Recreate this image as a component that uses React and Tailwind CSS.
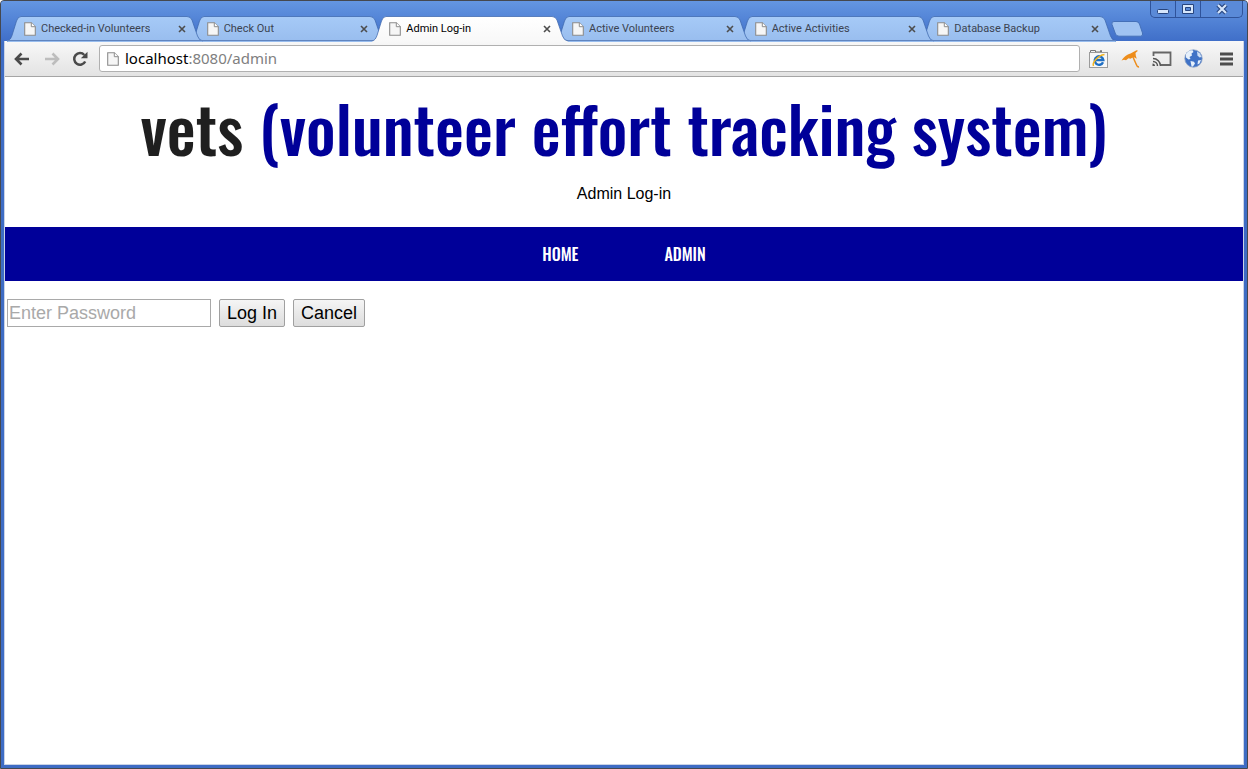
const tabs = [
  { title: 'Checked-in Volunteers', z: 'z-[6]' },
  { title: 'Check Out', z: 'z-[5]' },
  { title: 'Admin Log-in', z: 'z-[10]', active: true },
  { title: 'Active Volunteers', z: 'z-[4]' },
  { title: 'Active Activities', z: 'z-[3]' },
  { title: 'Database Backup', z: 'z-[2]' },
];

function PageIcon({ className = '' }) {
  return (
    <svg className={`shrink-0 ${className}`} width="12" height="14" viewBox="0 0 12 14" aria-hidden="true">
      <path d="M.7.7h6.6l4 4v8.6H.7z" fill="#f6f6f6" stroke="#8c8c8c" strokeWidth="1.1" />
      <path d="M7.3.7v4h4" fill="#fff" stroke="#8c8c8c" />
    </svg>
  );
}

function TabShape({ active }) {
  return (
    <svg className="absolute top-0 left-0 -z-10" width="196" height="26" viewBox="0 0 196 26" aria-hidden="true">
      <defs>
        <linearGradient id="tabIdle" x1="0" y1="0" x2="0" y2="1">
          <stop offset="0" stopColor="#a6caf7" />
          <stop offset="1" stopColor="#98bdee" />
        </linearGradient>
        <linearGradient id="tabActive" x1="0" y1="0" x2="0" y2="1">
          <stop offset="0" stopColor="#ffffff" />
          <stop offset="1" stopColor="#f8f8f8" />
        </linearGradient>
      </defs>
      <path
        d="M0 25C3 24.500 4 22 5 19.500L9.500 5Q11 .5 14 .5H180Q183.500.5 185 4L190.500 20Q192 24.500 196 25V26H0Z"
        fill={active ? 'url(#tabActive)' : 'url(#tabIdle)'}
      />
      <path
        d="M0 25C3 24.500 4 22 5 19.500L9.500 5Q11 .5 14 .5H180Q183.500.5 185 4L190.500 20Q192 24.500 196 25"
        fill="none"
        stroke="#3f68ad"
        strokeOpacity=".75"
      />
      {!active && <path d="M0 24.500H196" stroke="#5f84bf" />}
    </svg>
  );
}

function Tab({ title, z, active }) {
  return (
    <li className={`relative isolate flex h-[26px] items-center pl-[17px] ${z}`}>
      <TabShape active={active} />
      <a href="#tab" className="flex min-w-0 flex-1 items-center gap-[5px]">
        <PageIcon />
        <span className={`truncate text-[11px] leading-4 ${active ? 'text-black' : 'text-[#3b4351]'}`}>{title}</span>
      </a>
      <button type="button" aria-label={`Close ${title}`} className="flex h-4 w-4 items-center justify-center">
        <svg width="8" height="8" viewBox="0 0 8 8" aria-hidden="true">
          <path d="M1 1l6 6M7 1L1 7" stroke="#4d4d4d" strokeWidth="1.600" />
        </svg>
      </button>
    </li>
  );
}

function WindowControls() {
  const cell = 'flex h-full items-center justify-center';
  return (
    <div className="absolute top-0 right-1 flex h-[17px] rounded-b-[5px] border border-t-0 border-[#2f539a] bg-[#5a8ad8]">
      <button type="button" aria-label="Minimize" className={`${cell} w-[25px] border-r border-[#2f539a]`}>
        <svg width="14" height="14" viewBox="0 0 14 14" aria-hidden="true">
          <rect x="1.500" y="7.500" width="11" height="4" rx="1" fill="#d6e6fb" stroke="#27457f" />
        </svg>
      </button>
      <button type="button" aria-label="Maximize" className={`${cell} w-[25px] border-r border-[#2f539a]`}>
        <svg width="14" height="14" viewBox="0 0 14 14" aria-hidden="true">
          <path d="M1.500 2.500h11v9h-11z" fill="#d6e6fb" stroke="#27457f" />
          <path d="M4.500 5.500h5v3h-5z" fill="#5a8ad8" stroke="#27457f" />
        </svg>
      </button>
      <button type="button" aria-label="Close window" className={`${cell} w-[41px]`}>
        <svg width="14" height="14" viewBox="0 0 14 14" aria-hidden="true">
          <path d="M3 3l8 8M11 3l-8 8" stroke="#27457f" strokeWidth="4.500" />
          <path d="M3 3l8 8M11 3l-8 8" stroke="#d6e6fb" strokeWidth="2.200" />
        </svg>
      </button>
    </div>
  );
}

function Toolbar() {
  return (
    <div className="flex h-9 items-center rounded-t-[3px] border-b border-[#a5a5a5] bg-linear-to-b from-[#f8f8f8] to-[#e3e3e3] pr-2 pl-[9px]">
      <button type="button" aria-label="Back" className="mr-[14px]">
        <svg width="16" height="14" viewBox="0 0 16 14" aria-hidden="true">
          <path d="M15 7H2.500M7.500 1.500L2 7l5.500 5.500" fill="none" stroke="#4a4a4a" strokeWidth="2.600" />
        </svg>
      </button>
      <button type="button" aria-label="Forward" className="mr-3">
        <svg width="16" height="14" viewBox="0 0 16 14" aria-hidden="true">
          <path d="M1 7h12.500M8.500 1.500L14 7l-5.500 5.500" fill="none" stroke="#bdbdbd" strokeWidth="2.600" />
        </svg>
      </button>
      <button type="button" aria-label="Reload" className="mr-[10px]">
        <svg width="17" height="16" viewBox="0 0 17 16" aria-hidden="true">
          <path d="M13.200 10.500A5.800 5.800 0 1 1 12.300 4" fill="none" stroke="#4a4a4a" strokeWidth="2.500" />
          <path d="M15.500.7v6.600H8.900z" fill="#4a4a4a" />
        </svg>
      </button>
      <div className="flex h-[27px] min-w-0 flex-1 items-center rounded-[3px] border border-[#b0b0b0] bg-white pl-[7px] font-['Noto_Sans',sans-serif] text-[15px]">
        <PageIcon className="mr-1.5" />
        <span className="text-black">localhost</span>
        <span className="text-[#808080]">:8080/admin</span>
      </div>
      <button type="button" aria-label="Open in IE" className="ml-[9px]">
        <svg width="19" height="20" viewBox="0 0 19 20" aria-hidden="true">
          <path d="M1.500 4V1.500h5V3h5V1.500h1V4" fill="none" stroke="#777" />
          <rect x=".5" y="3.500" width="18" height="15" fill="#f7f7f7" stroke="#9b9b9b" />
          <path d="M14 13.200A4.300 4.300 0 1 1 14.300 11H6.500" fill="none" stroke="#1f6fc4" strokeWidth="2.400" />
          <path d="M4.500 17C3 14 8.500 6.500 15.500 5.500" fill="none" stroke="#f3b521" strokeWidth="1.500" />
        </svg>
      </button>
      <button type="button" aria-label="Umbrella extension" className="ml-[13px]">
        <svg width="19" height="20" viewBox="0 0 19 20" aria-hidden="true">
          <path d="M.5 11.500Q4 6 9.500 4.500L15.500 1.200 17 1.800 14.500 4Q14.500 6.500 15.800 9.800L12.500 8 9.500 9.800 7.500 9.300 5 11.300 3 10.700z" fill="#ed8d1c" />
          <path d="M11.500 7l3.800 8.500q1 2.800 2.700 2.300" fill="none" stroke="#ed8d1c" strokeWidth="1.500" />
        </svg>
      </button>
      <button type="button" aria-label="Cast" className="ml-3">
        <svg width="20" height="16" viewBox="0 0 20 16" aria-hidden="true">
          <path d="M1.500 5V1.500h17v12.500H9" fill="none" stroke="#666" strokeWidth="1.800" />
          <path d="M1 7.500A7.500 7.500 0 0 1 8.500 15M1 10.500A4.500 4.500 0 0 1 5.500 15" fill="none" stroke="#555" strokeWidth="1.500" />
          <path d="M.5 12.500A2.500 2.500 0 0 1 3 15H.5z" fill="#555" />
        </svg>
      </button>
      <button type="button" aria-label="Globe" className="ml-3">
        <svg width="19" height="19" viewBox="0 0 19 19" aria-hidden="true">
          <circle cx="9.500" cy="9.500" r="8.700" fill="#3f72c6" stroke="#8ea5c8" strokeWidth=".8" />
          <path d="M2 5Q4 1.500 8.500 1.200L9.500 3 7.500 4.500 8 6.500 5.500 8 6.500 10 4.500 10.500 2 8.500z" fill="#e6f0fb" />
          <path d="M13 2.500L16 4.500 17.500 8 15.500 8.500 13.500 6.500z" fill="#cfe0f6" />
          <path d="M6.500 12l3.500.8 1 1.700-2 3H7.500z" fill="#e6f0fb" />
          <path d="M14 11.500l3-.5-1.500 3.500-2 1z" fill="#e6f0fb" />
        </svg>
      </button>
      <button type="button" aria-label="Menu" className="mr-[2px] ml-[17px]">
        <svg width="13" height="14" viewBox="0 0 13 14" aria-hidden="true">
          <path d="M0 2h13M0 7h13M0 12h13" stroke="#4d4d4d" strokeWidth="2.800" />
        </svg>
      </button>
    </div>
  );
}

function LoginPage() {
  const heading = "font-['Oswald','Liberation_Sans_Narrow','Liberation_Sans',sans-serif]";
  return (
    <main className="flex-1 bg-white font-['Liberation_Sans',sans-serif] text-base text-black">
      <header className="text-center">
        <h1 className={`${heading} pb-[5px] text-[65px] leading-[100px] font-medium whitespace-nowrap text-[#000099] [font-variant-ligatures:none]`}>
          <span className="text-[#1f1f1f]">vets</span> (volunteer effort tracking system)
        </h1>
        <p className="pb-[21px] leading-6">Admin Log-in</p>
      </header>
      <nav className={`${heading} flex h-[54px] items-center justify-center gap-[86px] bg-[#000099] text-base font-medium text-white`}>
        <a href="#home">HOME</a>
        <a href="#admin">ADMIN</a>
      </nav>
      <form className="flex gap-2 px-0.5 py-[18px] text-lg leading-6" onSubmit={(e) => e.preventDefault()}>
        <input
          type="password"
          aria-label="Password"
          placeholder="Enter Password"
          className="h-7 w-[204px] border border-[#a9a9a9] bg-white px-px placeholder:text-[#a9a9a9]"
        />
        <button type="submit" className="h-7 rounded-[2px] border border-[#a0a0a0] bg-linear-to-b from-[#f5f5f5] to-[#dddddd] px-[7px]">
          Log In
        </button>
        <button type="button" className="h-7 rounded-[2px] border border-[#a0a0a0] bg-linear-to-b from-[#f5f5f5] to-[#dddddd] px-[7px]">
          Cancel
        </button>
      </form>
    </main>
  );
}

export default function App() {
  return (
    <div className="flex min-h-screen flex-col overflow-hidden rounded-t-[4px] border border-[#45484f] bg-[#3e6cc4] px-[3px] pb-[3px] font-[Roboto,'Noto_Sans',sans-serif]">
      <div className="relative -mx-[3px] bg-linear-to-b from-[#6496e2] to-[#3f6ec8] px-[3px] pt-[15px]">
        <div className="flex items-start pl-[3px]">
          <ul className="grid w-[1096px] shrink-0 grid-cols-6">
            {tabs.map((tab) => (
              <Tab key={tab.title} {...tab} />
            ))}
          </ul>
          <button type="button" aria-label="New tab" className="mt-[5px] ml-2">
            <svg width="33" height="16" viewBox="0 0 33 16" aria-hidden="true">
              <path
                d="M3 .5H25Q27.500.5 28.500 3L31.500 12Q32.300 15.200 29.500 15.200H8Q5.500 15.200 4.500 13L1 3.500Q0 .5 3 .5z"
                fill="#a0c3f2"
                stroke="#4470b8"
              />
            </svg>
          </button>
        </div>
        <WindowControls />
      </div>
      <div className="relative -mt-px flex flex-1 flex-col border-x border-b border-[#c9d3e6] bg-white">
        <Toolbar />
        <LoginPage />
      </div>
    </div>
  );
}
